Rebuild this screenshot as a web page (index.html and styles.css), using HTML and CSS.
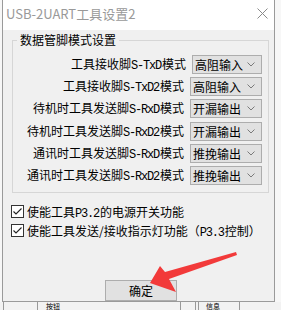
FILE: index.html
```html
<!DOCTYPE html>
<html lang="zh-CN">
<head>
<meta charset="utf-8">
<title>USB-2UART工具设置2</title>
<link rel="stylesheet" href="styles.css">
</head>
<body>
<div class="screen">
  <div class="window">
    <div class="titlebar">
      <span class="title">USB-2UART工具设置2</span>
      <svg class="close" width="11" height="11" viewBox="0 0 11 11"><path d="M0.5 0.5 L10.5 10.5 M10.5 0.5 L0.5 10.5" stroke="#8a8a8a" stroke-width="1" fill="none"/></svg>
    </div>
    <div class="client">
      <div class="group">
        <span class="legend">数据管脚模式设置</span>
        <div class="rows">
          <div class="row"><span class="label">工具接收脚<span class="m">S-TxD</span>模式</span><div class="combo c1"><span>高阻输入</span><svg class="chev" width="8" height="5" viewBox="0 0 8 5"><path d="M0.5 0.5 L4 4 L7.5 0.5" stroke="#7a7a7a" fill="none"/></svg></div></div>
          <div class="row"><span class="label">工具接收脚<span class="m">S-TxD2</span>模式</span><div class="combo"><span>高阻输入</span><svg class="chev" width="8" height="5" viewBox="0 0 8 5"><path d="M0.5 0.5 L4 4 L7.5 0.5" stroke="#7a7a7a" fill="none"/></svg></div></div>
          <div class="row"><span class="label">待机时工具发送脚<span class="m">S-RxD</span>模式</span><div class="combo"><span>开漏输出</span><svg class="chev" width="8" height="5" viewBox="0 0 8 5"><path d="M0.5 0.5 L4 4 L7.5 0.5" stroke="#7a7a7a" fill="none"/></svg></div></div>
          <div class="row r4"><span class="label">待机时工具发送脚<span class="m">S-RxD2</span>模式</span><div class="combo"><span>开漏输出</span><svg class="chev" width="8" height="5" viewBox="0 0 8 5"><path d="M0.5 0.5 L4 4 L7.5 0.5" stroke="#7a7a7a" fill="none"/></svg></div></div>
          <div class="row"><span class="label">通讯时工具发送脚<span class="m">S-RxD</span>模式</span><div class="combo"><span>推挽输出</span><svg class="chev" width="8" height="5" viewBox="0 0 8 5"><path d="M0.5 0.5 L4 4 L7.5 0.5" stroke="#7a7a7a" fill="none"/></svg></div></div>
          <div class="row"><span class="label">通讯时工具发送脚<span class="m">S-RxD2</span>模式</span><div class="combo"><span>推挽输出</span><svg class="chev" width="8" height="5" viewBox="0 0 8 5"><path d="M0.5 0.5 L4 4 L7.5 0.5" stroke="#7a7a7a" fill="none"/></svg></div></div>
        </div>
      </div>
      <div class="checks">
        <div class="check"><svg class="box" width="13" height="13" viewBox="0 0 13 13"><rect x="0.5" y="0.5" width="12" height="12" fill="#fff" stroke="#333"/><path d="M2.5 6.5 L5 9 L10.5 3.5" stroke="#222" stroke-width="1.1" fill="none"/></svg><span>使能工具<span class="m">P3.2</span>的电源开关功能</span></div>
        <div class="check"><svg class="box" width="13" height="13" viewBox="0 0 13 13"><rect x="0.5" y="0.5" width="12" height="12" fill="#fff" stroke="#333"/><path d="M2.5 6.5 L5 9 L10.5 3.5" stroke="#222" stroke-width="1.1" fill="none"/></svg><span>使能工具发送/接收指示灯功能（<span class="m">P3.3</span>控制）</span></div>
      </div>
      <div class="btn">确定</div>
    </div>
  </div>
  <div class="strip">
    <span class="cell c-a"></span>
    <span class="cell c-b">按钮</span>
    <span class="cell c-c"></span>
    <span class="cell c-d">信息</span>
  </div>
  <svg class="arrow" width="281" height="310" viewBox="0 0 281 310"><polygon points="150,283 160,266 165,272 236,252 237,255 169,279 176,292" fill="#f23a3a"/></svg>
</div>
</body>
</html>
```
FILE: styles.css
```css
html, body {
  margin: 0;
  padding: 0;
}
body {
  width: 281px;
  height: 310px;
  overflow: hidden;
  background: #f7f7f7;
  font-family: "Noto Sans CJK SC", "Noto Sans", sans-serif;
  font-size: 12px;
  color: #000;
}
.screen {
  position: relative;
  width: 281px;
  height: 310px;
  overflow: hidden;
}
.window {
  margin-left: 2px;
  width: 271px;
  border-left: 1px solid #9a9a9a;
  border-right: 1px solid #9a9a9a;
  border-bottom: 1px solid #9a9a9a;
}
.titlebar {
  height: 30px;
  background: #fff;
  display: flex;
  align-items: center;
  justify-content: space-between;
  padding-left: 3px;
  padding-right: 6px;
}
.title {
  color: #999;
  font-size: 13px;
  line-height: 16px;
  margin-top: -3px;
}
.close {
  margin-top: -3px;
}
.client {
  height: 271px;
  background: #f0f0f0;
  padding-top: 10px;
  box-sizing: border-box;
  display: flex;
  flex-direction: column;
}
.group {
  margin-left: 9px;
  width: 257px;
  height: 154px;
  box-sizing: border-box;
  border: 1px solid #d6d6d6;
  display: flex;
  flex-direction: column;
}
.legend {
  align-self: flex-start;
  margin: -9px 0 0 4px;
  padding: 0 3px;
  line-height: 16px;
  font-size: 12px;
  background: #f0f0f0;
}
.rows {
  margin-top: 7px;
  display: flex;
  flex-direction: column;
  gap: 3px;
}
.row {
  height: 19px;
  display: flex;
  align-items: center;
  justify-content: flex-end;
  padding-right: 6px;
}
.row.r4 {
  margin-top: 1px;
}
.label {
  margin-right: 6px;
  white-space: nowrap;
  line-height: 16px;
}
.m {
  font-family: "Liberation Mono", "DejaVu Sans Mono", monospace;
  font-size: 12px;
  letter-spacing: -1.2px;
  margin-right: 1px;
}
.combo {
  flex: none;
  width: 72px;
  height: 19px;
  box-sizing: border-box;
  border: 1px solid #adadad;
  background: #e1e1e1;
  display: flex;
  align-items: center;
  justify-content: space-between;
  padding: 0 6px 0 2px;
  font-size: 12px;
}
.combo.c1 {
  width: 70px;
}
.checks {
  margin-top: 9px;
  display: flex;
  flex-direction: column;
}
.check {
  height: 19px;
  display: flex;
  align-items: center;
  padding-left: 8px;
  gap: 3px;
  white-space: nowrap;
}
.box {
  flex: none;
}
.btn {
  margin: 40px 0 0 102px;
  width: 72px;
  height: 21px;
  box-sizing: border-box;
  border: 1px solid #adadad;
  background: #e1e1e1;
  display: flex;
  align-items: center;
  justify-content: center;
  font-size: 12px;
}
.strip {
  height: 8px;
  display: flex;
  background: #f2f2f2;
  overflow: hidden;
}
.cell {
  display: block;
  height: 8px;
  font-size: 7px;
  line-height: 8px;
}
.c-a {
  width: 33px;
  margin-left: 3px;
  border-left: 1px solid #999;
  border-right: 1px solid #999;
}
.c-b {
  width: 134px;
  padding-left: 8px;
  border-right: 1px solid #999;
  text-align: left;
}
.c-c {
  width: 2px;
  margin-left: 14px;
  border-left: 1px solid #999;
  border-right: 1px solid #999;
}
.c-d {
  width: 33px;
  padding-left: 7px;
  border-right: 1px solid #999;
}
.arrow {
  position: absolute;
  left: 0;
  top: 0;
  pointer-events: none;
}
```
